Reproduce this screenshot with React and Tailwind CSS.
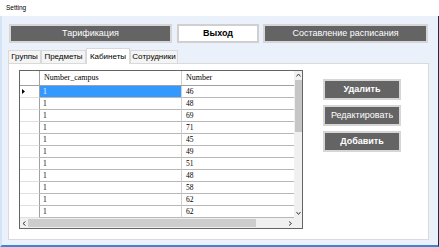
import React from 'react';

const rows = ['46', '48', '69', '71', '45', '49', '51', '48', '58', '62', '62'];

const Chevron = ({ dir }) => {
  const d = {
    up: 'M0.5 3.5 L2.5 1 L4.5 3.5',
    down: 'M0.5 1 L2.5 3.5 L4.5 1',
    left: 'M3.5 0.5 L1 2.5 L3.5 4.5',
    right: 'M1 0.5 L3.5 2.5 L1 4.5',
  }[dir];
  return (
    <svg width="5" height="5" viewBox="0 0 5 5" className="block">
      <path d={d} fill="none" stroke="#404040" strokeWidth="1" />
    </svg>
  );
};

const DarkButton = ({ children, className = '' }) => (
  <div className={`flex items-center justify-center bg-[#646464] border-2 border-[#d6d6d6] text-white text-[9px] ${className}`}>
    {children}
  </div>
);

const Tab = ({ children, active, className = '' }) => (
  <div
    className={
      active
        ? `h-[16px] -mb-px bg-white border border-[#d9d9d9] border-b-0 flex items-center justify-center text-[8px] text-black relative z-10 ${className}`
        : `h-[13px] bg-[#f4f4f4] border border-[#d9d9d9] border-b-0 flex items-center justify-center text-[8px] text-black ${className}`
    }
  >
    {children}
  </div>
);

function Grid() {
  return (
    <div className="w-[284px] h-[159px] border border-[#646464] bg-white flex flex-col font-['Liberation_Serif',serif] text-black">
      <div className="flex h-[147px]">
        <div className="w-[274px] flex flex-col">
          {/* header */}
          <div className="flex h-[15px] border-b border-[#a0a0a0]">
            <div className="w-[20px] border-r border-[#a0a0a0]" />
            <div className="w-[142px] border-r border-[#d0d0d0] pl-[4px] text-[8px] leading-[14px]">Number_campus</div>
            <div className="w-[112px] pl-[4px] text-[8px] leading-[14px]">Number</div>
          </div>
          {rows.map((n, i) => (
            <div key={i} className="flex h-[12px]">
              <div className="w-[20px] border-r border-[#a0a0a0] border-b border-b-[#e0e0e0] flex items-center pl-[2px]">
                {i === 0 && (
                  <svg width="3" height="5" viewBox="0 0 3 5" className="block">
                    <path d="M0 0 L3 2.5 L0 5 Z" fill="#000" />
                  </svg>
                )}
              </div>
              <div
                className={`w-[142px] border-r border-[#d0d0d0] border-b border-b-[#b8b8b8] pl-[3px] text-[7.5px] leading-[11px] ${
                  i === 0 ? 'bg-[#3399ff] text-white' : ''
                }`}
              >
                1
              </div>
              <div className="w-[112px] border-b border-[#b8b8b8] pl-[4px] text-[7.5px] leading-[11px]">{n}</div>
            </div>
          ))}
        </div>
        {/* vertical scrollbar */}
        <div className="w-[8px] bg-[#f0f0f0] flex flex-col items-center">
          <div className="h-[9px] flex items-center justify-center">
            <Chevron dir="up" />
          </div>
          <div className="w-[7px] h-[52px] bg-[#c6c6c6]" />
          <div className="flex-1" />
          <div className="h-[9px] flex items-center justify-center">
            <Chevron dir="down" />
          </div>
        </div>
      </div>
      {/* horizontal scrollbar */}
      <div className="flex h-[10px] flex-1">
        <div className="w-[274px] bg-[#f0f0f0] flex items-center">
          <div className="w-[8px] flex justify-center">
            <Chevron dir="left" />
          </div>
          <div className="w-[228px] h-[8px] bg-[#cdcdcd]" />
          <div className="flex-1" />
          <div className="w-[8px] flex justify-center">
            <Chevron dir="right" />
          </div>
        </div>
        <div className="w-[8px] bg-[#f0f0f0]" />
      </div>
    </div>
  );
}

export default function App() {
  return (
    <div className="w-[439px] h-[247px] flex flex-col bg-white overflow-hidden font-['Liberation_Sans',Arial,sans-serif]">
      <div className="h-[16px] pl-[6px] flex items-center text-[6.5px] text-black">Setting</div>
      <div className="flex-1 flex flex-col bg-[#eaf1fa] border-b-2 border-b-[#3d85d4] border-r border-r-[#1e2c48] border-l-2 border-l-[#d3e4f5] pl-[6px] pr-[9px] pt-[8px] pb-[5px]">
        <div className="flex h-[19px] ml-[1px] gap-[5px]">
          <DarkButton className="w-[163px]">Тарификация</DarkButton>
          <div className="w-[82px] flex items-center justify-center bg-white border-2 border-[#d0d0d0] text-[9px] font-bold text-black">
            Выход
          </div>
          <DarkButton className="w-[165px] ml-[-1px]">Составление расписания</DarkButton>
        </div>
        <div className="flex items-end h-[15px] mt-[5px]">
          <Tab className="w-[33px]">Группы</Tab>
          <Tab className="w-[45px]">Предметы</Tab>
          <Tab active className="w-[44px]">Кабинеты</Tab>
          <Tab className="w-[48px]">Сотрудники</Tab>
        </div>
        <div className="flex-1 bg-white border border-[#dadada] pl-[10px] pt-[6px] flex">
          <Grid />
          <div className="ml-[20px] mt-[9px] flex flex-col gap-[5px]">
            <DarkButton className="w-[78px] h-[21px] font-bold">Удалить</DarkButton>
            <DarkButton className="w-[78px] h-[21px]">Редактировать</DarkButton>
            <DarkButton className="w-[78px] h-[21px] font-bold">Добавить</DarkButton>
          </div>
        </div>
      </div>
    </div>
  );
}
